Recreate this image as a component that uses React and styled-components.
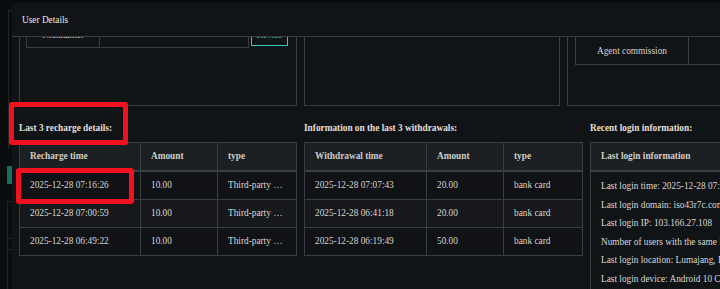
import React, { useLayoutEffect, useRef } from "react";
import styled, { createGlobalStyle } from "styled-components";

const line = "#3b3e41";
const serif = `"Liberation Serif", "Times New Roman", "DejaVu Serif", serif`;

const GlobalStyle = createGlobalStyle`
  html, body {
    margin: 0;
    padding: 0;
    background: #0a0c0d;
  }
  body {
    font-family: ${serif};
    font-size: 9.3px;
  }
  * {
    box-sizing: border-box;
  }
`;

const Page = styled.div`
  position: relative;
  width: 720px;
  height: 289px;
  overflow: hidden;
  background: #0a0c0d;
  font-family: ${serif};
  font-size: 9.3px;
`;

/* page behind the dialog */
const Backdrop = styled.div`
  display: flex;
  flex-direction: column;
  width: 12px;
  height: 100%;
`;
const BackFrame = styled.div`
  margin: 10px 0 0 8px;
  height: 148px;
  border-left: 1px solid #222527;
  border-top: 1px solid #222527;
`;
const BackTab = styled.div`
  margin: 17px 0 0 7px;
  width: 5px;
  height: 19px;
  border-radius: 1px;
  background: #1c6c61;
`;
const BackTree = styled.div`
  flex: 1;
  margin: 17px 0 0 7px;
  display: flex;
  flex-direction: column;
  border-left: 1px solid #222527;
`;
const BackTick = styled.div`
  height: ${(p) => p.$h}px;
  border-top: 1px solid #222527;
`;

/* dialog */
const Modal = styled.div`
  position: absolute;
  top: 3px;
  left: 12px;
  width: 872px;
  height: 300px;
  display: flex;
  flex-direction: column;
  background: #111417;
`;
const Header = styled.div`
  flex: none;
  height: 34px;
  display: flex;
  align-items: center;
  padding: 0 10px;
  border-bottom: 1px solid ${line};
  color: #e6e6e6;
`;
const Body = styled.div`
  flex: 1;
  overflow: hidden;
  padding: 10px 7px 60px;
`;

const PanelRow = styled.div`
  display: grid;
  grid-template-columns: 278px 256px 300px;
  column-gap: 7px;
`;
const Panel = styled.div`
  height: 170px;
  border: 1px solid ${line};
  padding: ${(p) => p.$top}px ${(p) => p.$side}px 0;
`;
const FormRow = styled.div`
  display: flex;
  align-items: center;
  gap: 2px;
  height: ${(p) => p.$h + (p.$last ? 1 : 0)}px;
`;
const Pair = styled.div`
  display: flex;
  align-self: stretch;
  border: 1px solid ${line};
  border-bottom: ${(p) => (p.$last ? `1px solid ${line}` : "none")};
  color: #d6d3cc;
`;
const Label = styled.div`
  width: ${(p) => p.$w}px;
  display: flex;
  align-items: center;
  justify-content: center;
  border-right: 1px solid ${line};
  white-space: nowrap;
`;
const Value = styled.div`
  width: ${(p) => p.$w}px;
  display: flex;
  align-items: center;
  padding: 0 8px;
`;
const ReviseButton = styled.button`
  width: 37px;
  height: 22px;
  padding: 0;
  border: 1px solid #3cc8be;
  background: transparent;
  color: #3cc8be;
  font-family: ${serif};
  font-size: 9.3px;
`;

const InfoGrid = styled.div`
  display: grid;
  grid-template-columns: 278px 279px 278px;
  column-gap: 7px;
  margin-top: 12px;
`;
const SectionTitle = styled.h3`
  margin: 0 0 4px;
  font-size: 9.3px;
  line-height: 20px;
  font-weight: 700;
  color: #e2dfd8;
  white-space: nowrap;
`;
const Table = styled.div`
  display: grid;
  grid-template-columns: ${(p) => p.$cols};
  border-top: 1px solid ${line};
  border-left: 1px solid ${line};
`;
const HeadCell = styled.div`
  height: 29px;
  padding: 0 10px;
  line-height: 27px;
  border-right: 1px solid ${line};
  border-bottom: 2px solid ${line};
  background: #1d2023;
  color: #cfcbc3;
  font-weight: 700;
  white-space: nowrap;
  overflow: hidden;
`;
const Cell = styled.div`
  height: 28px;
  padding: 0 10px;
  line-height: 27px;
  border-right: 1px solid ${line};
  border-bottom: 1px solid ${line};
  background: ${(p) => (p.$stripe ? "#16181b" : "#101215")};
  color: #d9d8d4;
  white-space: nowrap;
  overflow: hidden;
  text-overflow: ellipsis;
`;
const LoginBody = styled.div`
  padding: 5px 10px;
  border-right: 1px solid ${line};
  border-bottom: 1px solid ${line};
  color: #d9d8d4;
`;
const LoginLine = styled.div`
  line-height: 18.6px;
  white-space: nowrap;
`;

/* screenshot annotations */
const Marker = styled.div`
  position: absolute;
  left: ${(p) => p.$x}px;
  top: ${(p) => p.$y}px;
  width: ${(p) => p.$w}px;
  height: ${(p) => p.$h}px;
  border: 5px solid #f2121f;
  border-radius: 3px;
  pointer-events: none;
`;

const profile = ["Account:", "Real name:", "Phone:", "Nickname:"];
const funds = ["Total recharge", "Total withdrawal", "Balance", "Agent commission"];

const recharges = [
  ["2025-12-28 07:16:26", "10.00", "Third-party payment"],
  ["2025-12-28 07:00:59", "10.00", "Third-party payment"],
  ["2025-12-28 06:49:22", "10.00", "Third-party payment"],
];
const withdrawals = [
  ["2025-12-28 07:07:43", "20.00", "bank card"],
  ["2025-12-28 06:41:18", "20.00", "bank card"],
  ["2025-12-28 06:19:49", "50.00", "bank card"],
];
const logins = [
  "Last login time: 2025-12-28 07:16:26",
  "Last login domain: iso43r7c.com",
  "Last login IP: 103.166.27.108",
  "Number of users with the same IP: 1",
  "Last login location: Lumajang, Indonesia",
  "Last login device: Android 10 Chrome",
  "Last login browser: Chrome 120",
];

const RecordTable = ({ cols, heads, rows }) => (
  <Table $cols={cols}>
    {heads.map((h) => (
      <HeadCell key={h}>{h}</HeadCell>
    ))}
    {rows.map((r, i) =>
      r.map((v, j) => (
        <Cell key={i + "-" + j} $stripe={i % 2 === 1}>
          {v}
        </Cell>
      ))
    )}
  </Table>
);

export default function App() {
  const bodyRef = useRef(null);

  useLayoutEffect(() => {
    if (bodyRef.current) bodyRef.current.scrollTop = 111;
  }, []);

  return (
    <Page>
      <GlobalStyle />
      <Backdrop>
        <BackFrame />
        <BackTab />
        <BackTree>
          <BackTick $h={37} />
          <BackTick $h={11} />
          <BackTick $h={40} />
        </BackTree>
      </Backdrop>

      <Modal>
        <Header>User Details</Header>
        <Body ref={bodyRef}>
          <PanelRow>
            <Panel $top={6} $side={6}>
              {profile.map((p, i) => {
                const last = i === profile.length - 1;
                return (
                  <FormRow key={p} $h={26} $last={last}>
                    <Pair $last={last}>
                      <Label $w={73}>{p}</Label>
                      <Value $w={148} />
                    </Pair>
                    {last && <ReviseButton>Revise</ReviseButton>}
                  </FormRow>
                );
              })}
            </Panel>
            <Panel $top={6} $side={7} />
            <Panel $top={15} $side={7}>
              {funds.map((f, i) => {
                const last = i === funds.length - 1;
                return (
                  <FormRow key={f} $h={28} $last={last}>
                    <Pair $last={last}>
                      <Label $w={113}>{f}</Label>
                      <Value $w={160} />
                    </Pair>
                  </FormRow>
                );
              })}
            </Panel>
          </PanelRow>

          <InfoGrid>
            <section>
              <SectionTitle>Last 3 recharge details:</SectionTitle>
              <RecordTable
                cols="121px 77px 79px"
                heads={["Recharge time", "Amount", "type"]}
                rows={recharges}
              />
            </section>
            <section>
              <SectionTitle>Information on the last 3 withdrawals:</SectionTitle>
              <RecordTable
                cols="122px 77px 79px"
                heads={["Withdrawal time", "Amount", "type"]}
                rows={withdrawals}
              />
            </section>
            <section>
              <SectionTitle>Recent login information:</SectionTitle>
              <Table $cols="1fr">
                <HeadCell>Last login information</HeadCell>
                <LoginBody>
                  {logins.map((l) => (
                    <LoginLine key={l}>{l}</LoginLine>
                  ))}
                </LoginBody>
              </Table>
            </section>
          </InfoGrid>
        </Body>
      </Modal>

      <Marker $x={9} $y={102} $w={119} $h={43} />
      <Marker $x={16} $y={168} $w={118} $h={36} />
    </Page>
  );
}
